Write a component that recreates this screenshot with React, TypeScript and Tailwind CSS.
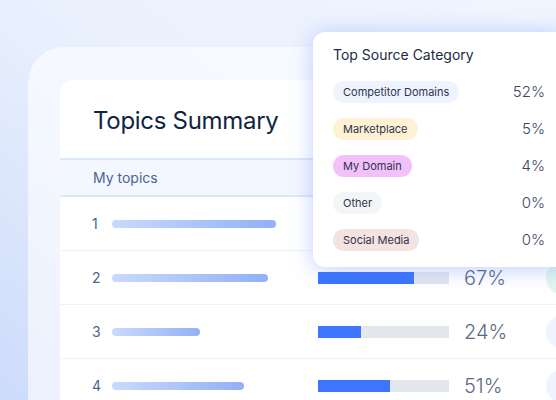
import React from "react";

const rows = [
  { n: 1, bar: 164, pct: 52, fill: 68, circle: "bg-[#eef3fe]" },
  { n: 2, bar: 156, pct: 67, fill: 96, circle: "bg-[#e3f6ef]" },
  { n: 3, bar: 88, pct: 24, fill: 43, circle: "bg-[#eef3fe]" },
  { n: 4, bar: 132, pct: 51, fill: 72, circle: "bg-[#eef3fe]" },
];

const cats = [
  { label: "Competitor Domains", pct: "52%", cls: "bg-[#eef3fe]" },
  { label: "Marketplace", pct: "5%", cls: "bg-[#fff2d3]" },
  { label: "My Domain", pct: "4%", cls: "bg-[#f3c1fa]" },
  { label: "Other", pct: "0%", cls: "bg-[#f4f5f7]" },
  { label: "Social Media", pct: "0%", cls: "bg-[#f6e2de]" },
];

export default function App() {
  return (
    <div
      className="relative w-[556px] h-[400px] overflow-hidden bg-gradient-to-tr from-[#cddbfb] via-[#e9f0fd] to-[#f1f5fe]"
      style={{ fontFamily: "Inter, 'Noto Sans', sans-serif" }}
    >
      <div className="ml-[28px] mt-[47px] w-[620px] h-[420px] rounded-tl-[36px] bg-white/60 pt-[33px] pl-[32px]">
        <div className="w-[600px] h-[400px] rounded-tl-[14px] bg-white">
          <div className="h-[78px] pl-[33px] flex items-center">
            <h1 className="text-[24px] leading-none text-[#10253f] tracking-[-0.3px] pt-[3px]">Topics Summary</h1>
          </div>
          <div className="h-[39px] border-y-2 border-[#dde7fc] bg-[#f3f7ff] pl-[33px] flex items-center">
            <span className="text-[14px] text-[#4a6591]">My topics</span>
          </div>
          {rows.map((r) => (
            <div key={r.n} className="h-[54px] border-b border-[#f0f2f6] pl-[32px] flex items-center">
              <span className="w-[20px] text-[14px] text-[#4a6591]">{r.n}</span>
              <div className="w-[206px]">
                <div
                  className="h-[8px] rounded-full bg-gradient-to-r from-[#c9dafb] to-[#92b0f6]"
                  style={{ width: r.bar }}
                />
              </div>
              <div className="w-[131px] h-[12px] bg-[#e4e8ec]">
                <div className="h-full bg-[#3d75ff]" style={{ width: r.fill }} />
              </div>
              <span className="ml-[15px] w-[82px] text-[20px] font-light text-[#5b6b84]">{r.pct}%</span>
              <div className={`w-[34px] h-[34px] rounded-full ${r.circle}`} />
            </div>
          ))}
        </div>
      </div>

      <div className="absolute left-[313px] top-[32px] w-[256px] h-[235px] rounded-[12px] bg-white shadow-[0_2px_22px_rgba(70,120,255,0.35)] pl-[20px] pr-[24px] pt-[13px]">
        <div className="h-[20px] text-[14px] leading-[20px] text-[#1c2a44]">Top Source Category</div>
        <div className="mt-[16px] flex flex-col gap-[15px]">
          {cats.map((c) => (
            <div key={c.label} className="h-[22px] flex items-center justify-between">
              <span className={`h-[22px] px-[10px] rounded-full flex items-center text-[11px] font-normal text-[#2c3550] ${c.cls}`}>
                {c.label}
              </span>
              <span className="text-[15px] font-light text-[#3b4863]">{c.pct}</span>
            </div>
          ))}
        </div>
      </div>
    </div>
  );
}
